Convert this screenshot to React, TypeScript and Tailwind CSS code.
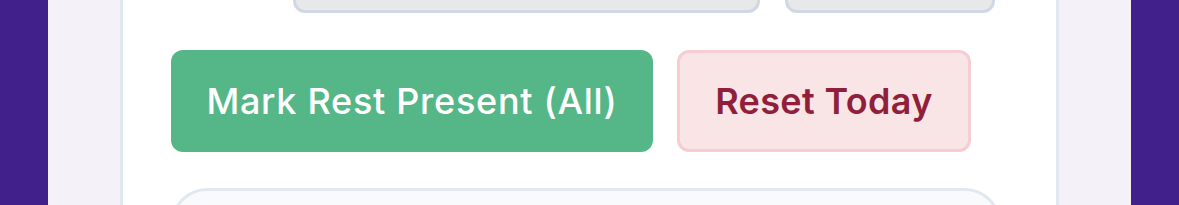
export default function App() {
  return (
    <div className="flex h-[205px] w-[1179px] overflow-hidden bg-[#42208c] px-[48px]">
      <div className="flex-1 bg-[#f4f1f8] px-[72px]">
        {/* Card */}
        <div className="flex h-full flex-col overflow-hidden border-x-[3px] border-[#e2e8f0] bg-white px-[48px] font-['Inter',sans-serif]">
          {/* Inputs (cut off at top) */}
          <div className="-mt-[37px] flex h-[50px] shrink-0 gap-[25px] pl-[122px]">
            <div className="w-[467px] rounded-xl border-[3px] border-[#cfd8e3] bg-[#e8e8eb]" />
            <div className="w-[210px] rounded-xl border-[3px] border-[#cfd8e3] bg-[#e8e8eb]" />
          </div>

          {/* Actions */}
          <div className="mt-[37px] flex shrink-0 gap-[24px]">
            <button className="flex h-[102px] w-[482px] items-center justify-center rounded-xl bg-[#55b787] text-[36px] font-medium tracking-[0.02em] text-white">
              Mark Rest Present (All)
            </button>
            <button className="flex h-[102px] w-[294px] items-center justify-center rounded-xl border-[3px] border-[#f5cdd2] bg-[#f9e4e6] text-[36px] font-semibold tracking-[0.01em] text-[#8f1f3a]">
              Reset Today
            </button>
          </div>

          {/* Next panel */}
          <div className="mt-[36px] h-[80px] w-[830px] shrink-0 rounded-[36px] border-[3px] border-[#e2e8f0] bg-[#f8fafc]" />
        </div>
      </div>
    </div>
  );
}
